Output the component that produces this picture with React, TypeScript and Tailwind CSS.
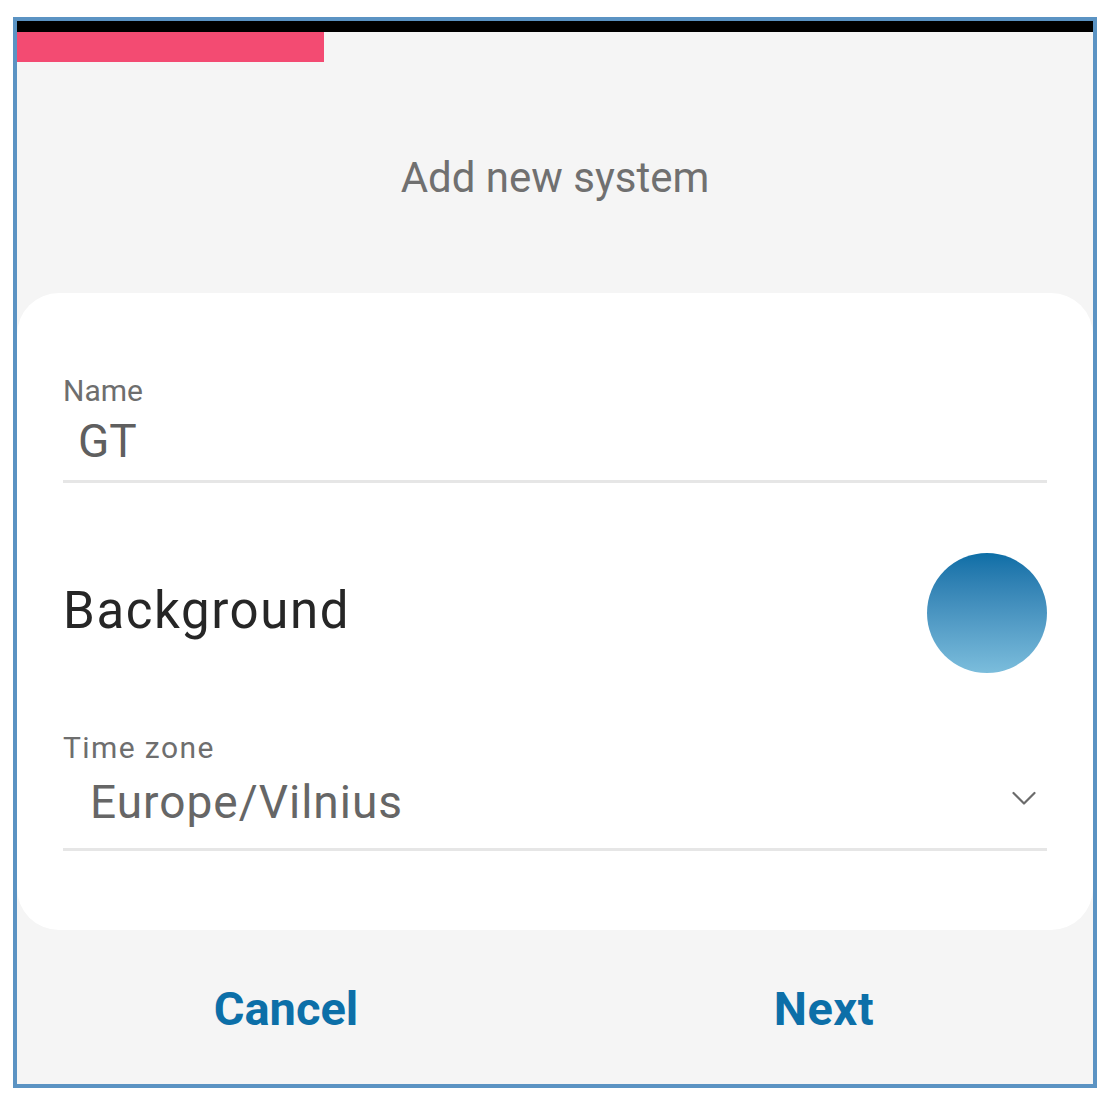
function Chevron() {
  return (
    <svg width="26" height="16" viewBox="0 0 26 16" fill="none">
      <polyline points="2.5,2 13,12.5 23.5,2" stroke="#6b6b6b" strokeWidth="2.2" strokeLinecap="round" strokeLinejoin="round" />
    </svg>
  );
}

export default function App() {
  return (
    <div className="w-[1110px] h-[1110px] bg-white font-['Roboto',sans-serif] pt-[17px] pl-[13px]">
      <div className="w-[1084px] h-[1071px] border-4 border-[#5b93c3] bg-[#f5f5f5] flex flex-col">
        <div className="h-[11px] bg-black" />
        <div className="h-[30px] w-[307px] bg-[#f34b72]" />

        <h1 className="pt-[91px] text-center text-[42px] leading-[50px] text-[#707070] font-normal">
          Add new system
        </h1>

        <div className="mt-[90px] bg-white rounded-[42px] px-[46px] pt-[80px] pb-[79px]">
          <div className="border-b-[3px] border-[#e6e6e6] pb-[12px]">
            <div className="text-[30px] leading-[36px] text-[#6e6e6e]">Name</div>
            <div className="mt-[5px] pl-[15px] text-[46px] leading-[54px] text-[#5f5f5f]">GT</div>
          </div>

          <div className="mt-[70px] h-[120px] flex items-center justify-between">
            <span className="text-[51px] leading-[56px] tracking-[1.6px] text-[#262626] mb-[4px]">Background</span>
            <div className="w-[120px] h-[120px] rounded-full bg-gradient-to-b from-[#0b6ea6] to-[#7bbddc]" />
          </div>

          <div className="mt-[57px] text-[30px] leading-[36px] tracking-[1.4px] text-[#6e6e6e]">Time zone</div>
          <div className="mt-[10px] border-b-[3px] border-[#e6e6e6] pb-[20px] flex items-center justify-between pl-[27px] pr-[10px]">
            <span className="text-[46px] leading-[52px] tracking-[1px] text-[#666666]">Europe/Vilnius</span>
            <div className="mt-[-6px]">
              <Chevron />
            </div>
          </div>
        </div>

        <div className="mt-[51px] flex">
          <button className="flex-1 text-center text-[47px] leading-[56px] font-bold text-[#0c6fa8]">Cancel</button>
          <button className="flex-1 text-center text-[47px] leading-[56px] font-bold tracking-[0.5px] text-[#0c6fa8]">Next</button>
        </div>
      </div>
    </div>
  );
}
